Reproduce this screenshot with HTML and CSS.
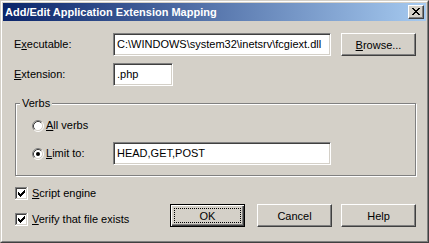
FILE: index.html
```html
<!DOCTYPE html>
<html>
<head>
<meta charset="utf-8">
<title>Add/Edit Application Extension Mapping</title>
<link rel="stylesheet" href="styles.css">
</head>
<body>
<div class="window">
  <div class="frame">
    <div class="titlebar">
      <span class="title">Add/Edit Application Extension Mapping</span>
      <div class="close">
        <svg width="8" height="7" viewBox="0 0 8 7" shape-rendering="crispEdges"><path fill="#000" d="M0 0h2v1H0z M6 0h2v1H6z M1 1h2v1H1z M5 1h2v1H5z M2 2h4v1H2z M3 3h2v1H3z M2 4h4v1H2z M1 5h2v1H1z M5 5h2v1H5z M0 6h2v1H0z M6 6h2v1H6z"/></svg>
      </div>
    </div>
    <div class="content">
      <div class="row">
        <span class="lbl">E<u>x</u>ecutable:</span>
        <div class="edit w-long">C:\WINDOWS\system32\inetsrv\fcgiext.dll</div>
        <div class="btn browse"><span><u>B</u>rowse...</span></div>
      </div>
      <div class="row row2">
        <span class="lbl"><u>E</u>xtension:</span>
        <div class="edit w-ext">.php</div>
      </div>
      <div class="group">
        <span class="legend">Verbs</span>
        <div class="radio-row">
          <svg class="radio" width="12" height="12" viewBox="0 0 12 12"><circle cx="6" cy="6" r="4.5" fill="#fff"/><path d="M2.11 9.89A5.5 5.5 0 0 1 9.89 2.11" fill="none" stroke="#808080"/><path d="M9.89 2.11A5.5 5.5 0 0 1 2.11 9.89" fill="none" stroke="#fff"/><path d="M2.82 9.18A4.5 4.5 0 0 1 9.18 2.82" fill="none" stroke="#404040"/><path d="M9.18 2.82A4.5 4.5 0 0 1 2.82 9.18" fill="none" stroke="#d4d0c8"/></svg>
          <span class="rlabel"><u>A</u>ll verbs</span>
        </div>
        <div class="radio-row">
          <svg class="radio" width="12" height="12" viewBox="0 0 12 12"><circle cx="6" cy="6" r="4.5" fill="#fff"/><path d="M2.11 9.89A5.5 5.5 0 0 1 9.89 2.11" fill="none" stroke="#808080"/><path d="M9.89 2.11A5.5 5.5 0 0 1 2.11 9.89" fill="none" stroke="#fff"/><path d="M2.82 9.18A4.5 4.5 0 0 1 9.18 2.82" fill="none" stroke="#404040"/><path d="M9.18 2.82A4.5 4.5 0 0 1 2.82 9.18" fill="none" stroke="#d4d0c8"/><circle cx="6" cy="6" r="2" fill="#000"/></svg>
          <span class="rlabel limit"><u>L</u>imit to:</span>
          <div class="edit w-long">HEAD,GET,POST</div>
        </div>
      </div>
      <div class="bottom">
        <div class="checks">
          <div class="check-row">
            <svg class="check" width="13" height="13" viewBox="0 0 13 13" shape-rendering="crispEdges"><rect width="13" height="13" fill="#fff"/><path fill="#808080" d="M0 0h12v1H1v11H0z"/><path fill="#404040" d="M1 1h10v1H2v9H1z"/><path fill="#d4d0c8" d="M1 11h10V1h1v11H1z"/><path fill="#000" d="M3 5h1v3H3z M4 6h1v3H4z M5 7h1v3H5z M6 6h1v3H6z M7 5h1v3H7z M8 4h1v3H8z M9 3h1v3H9z"/></svg>
            <span><u>S</u>cript engine</span>
          </div>
          <div class="check-row">
            <svg class="check" width="13" height="13" viewBox="0 0 13 13" shape-rendering="crispEdges"><rect width="13" height="13" fill="#fff"/><path fill="#808080" d="M0 0h12v1H1v11H0z"/><path fill="#404040" d="M1 1h10v1H2v9H1z"/><path fill="#d4d0c8" d="M1 11h10V1h1v11H1z"/><path fill="#000" d="M3 5h1v3H3z M4 6h1v3H4z M5 7h1v3H5z M6 6h1v3H6z M7 5h1v3H7z M8 4h1v3H8z M9 3h1v3H9z"/></svg>
            <span><u>V</u>erify that file exists</span>
          </div>
        </div>
        <div class="buttons">
          <div class="btn default"><span class="focus">OK</span></div>
          <div class="btn cancel"><span>Cancel</span></div>
          <div class="btn help"><span>Help</span></div>
        </div>
      </div>
    </div>
  </div>
</div>
</body>
</html>
```

FILE: styles.css
```css
* { box-sizing: border-box; }
html, body { margin: 0; padding: 0; }
body {
  width: 429px;
  height: 243px;
  overflow: hidden;
  background: #d4d0c8;
  color: #000;
  font-family: "Liberation Sans", Arial, sans-serif;
  font-size: 11px;
}
u { text-decoration: underline; text-underline-offset: 1px; }

.window {
  width: 429px;
  height: 243px;
  border: 1px solid;
  border-color: #d4d0c8 #404040 #404040 #d4d0c8;
}
.frame {
  height: 100%;
  border: 1px solid;
  border-color: #fff #808080 #808080 #fff;
  padding: 1px;
  background: #d4d0c8;
}
.titlebar {
  height: 18px;
  display: flex;
  align-items: center;
  justify-content: space-between;
  padding: 0 2px;
  background: linear-gradient(to right, #0a246a, #a6caf0);
}
.title {
  color: #fff;
  font-weight: bold;
  line-height: 18px;
  white-space: nowrap;
}
.close {
  width: 16px;
  height: 14px;
  background: #d4d0c8;
  border: 1px solid;
  border-color: #fff #404040 #404040 #fff;
  box-shadow: inset -1px -1px #808080;
}
.close svg { display: block; margin: 2px 0 0 3px; }

.content { padding: 12px 10px 0 11px; }

.row { display: flex; align-items: center; height: 23px; }
.row2 { margin-top: 7px; }
.lbl { width: 99px; line-height: 23px; white-space: nowrap; }

.edit {
  height: 23px;
  line-height: 21px;
  padding-left: 3px;
  background: #fff;
  border: 1px solid;
  border-color: #808080 #fff #fff #808080;
  box-shadow: inset 1px 1px #404040, inset -1px -1px #d4d0c8;
  white-space: nowrap;
  overflow: hidden;
}
.w-long { width: 218px; }
.w-ext { width: 60px; }

.btn {
  width: 75px;
  height: 23px;
  display: flex;
  align-items: center;
  justify-content: center;
  background: #d4d0c8;
  border: 1px solid;
  border-color: #fff #404040 #404040 #fff;
  box-shadow: inset -1px -1px #808080;
  white-space: nowrap;
}
.browse { margin-left: 10px; }
.btn.default {
  border-color: #000;
  box-shadow: inset 1px 1px #fff, inset -1px -1px #404040, inset -2px -2px #808080;
  padding: 3px;
}
.focus {
  flex: 1;
  align-self: stretch;
  display: flex;
  align-items: center;
  justify-content: center;
  border: 1px dotted #000;
}
.cancel { margin-left: 12px; }
.help { margin-left: 9px; }

.group {
  position: relative;
  width: 401px;
  margin: 17px 0 0 1px;
  padding: 10px 0 10px 16px;
  border: 1px solid #808080;
  box-shadow: inset 1px 1px #fff, 1px 1px #fff;
}
.legend {
  position: absolute;
  top: -7px;
  left: 4px;
  padding: 0 2px;
  line-height: 12px;
  background: #d4d0c8;
}
.radio-row { display: flex; align-items: center; height: 23px; }
.radio-row + .radio-row { margin-top: 5px; }
.radio { display: block; margin-right: 2px; flex: none; }
.rlabel { line-height: 23px; white-space: nowrap; }
.limit { width: 67px; }

.bottom { display: flex; justify-content: space-between; }
.checks {
  display: flex;
  flex-direction: column;
  gap: 13px;
  padding-top: 11px;
  margin-left: 1px;
}
.check-row {
  display: flex;
  align-items: center;
  gap: 4px;
  height: 13px;
  line-height: 13px;
  white-space: nowrap;
}
.check { display: block; flex: none; }
.buttons { display: flex; padding-top: 28px; }
```
